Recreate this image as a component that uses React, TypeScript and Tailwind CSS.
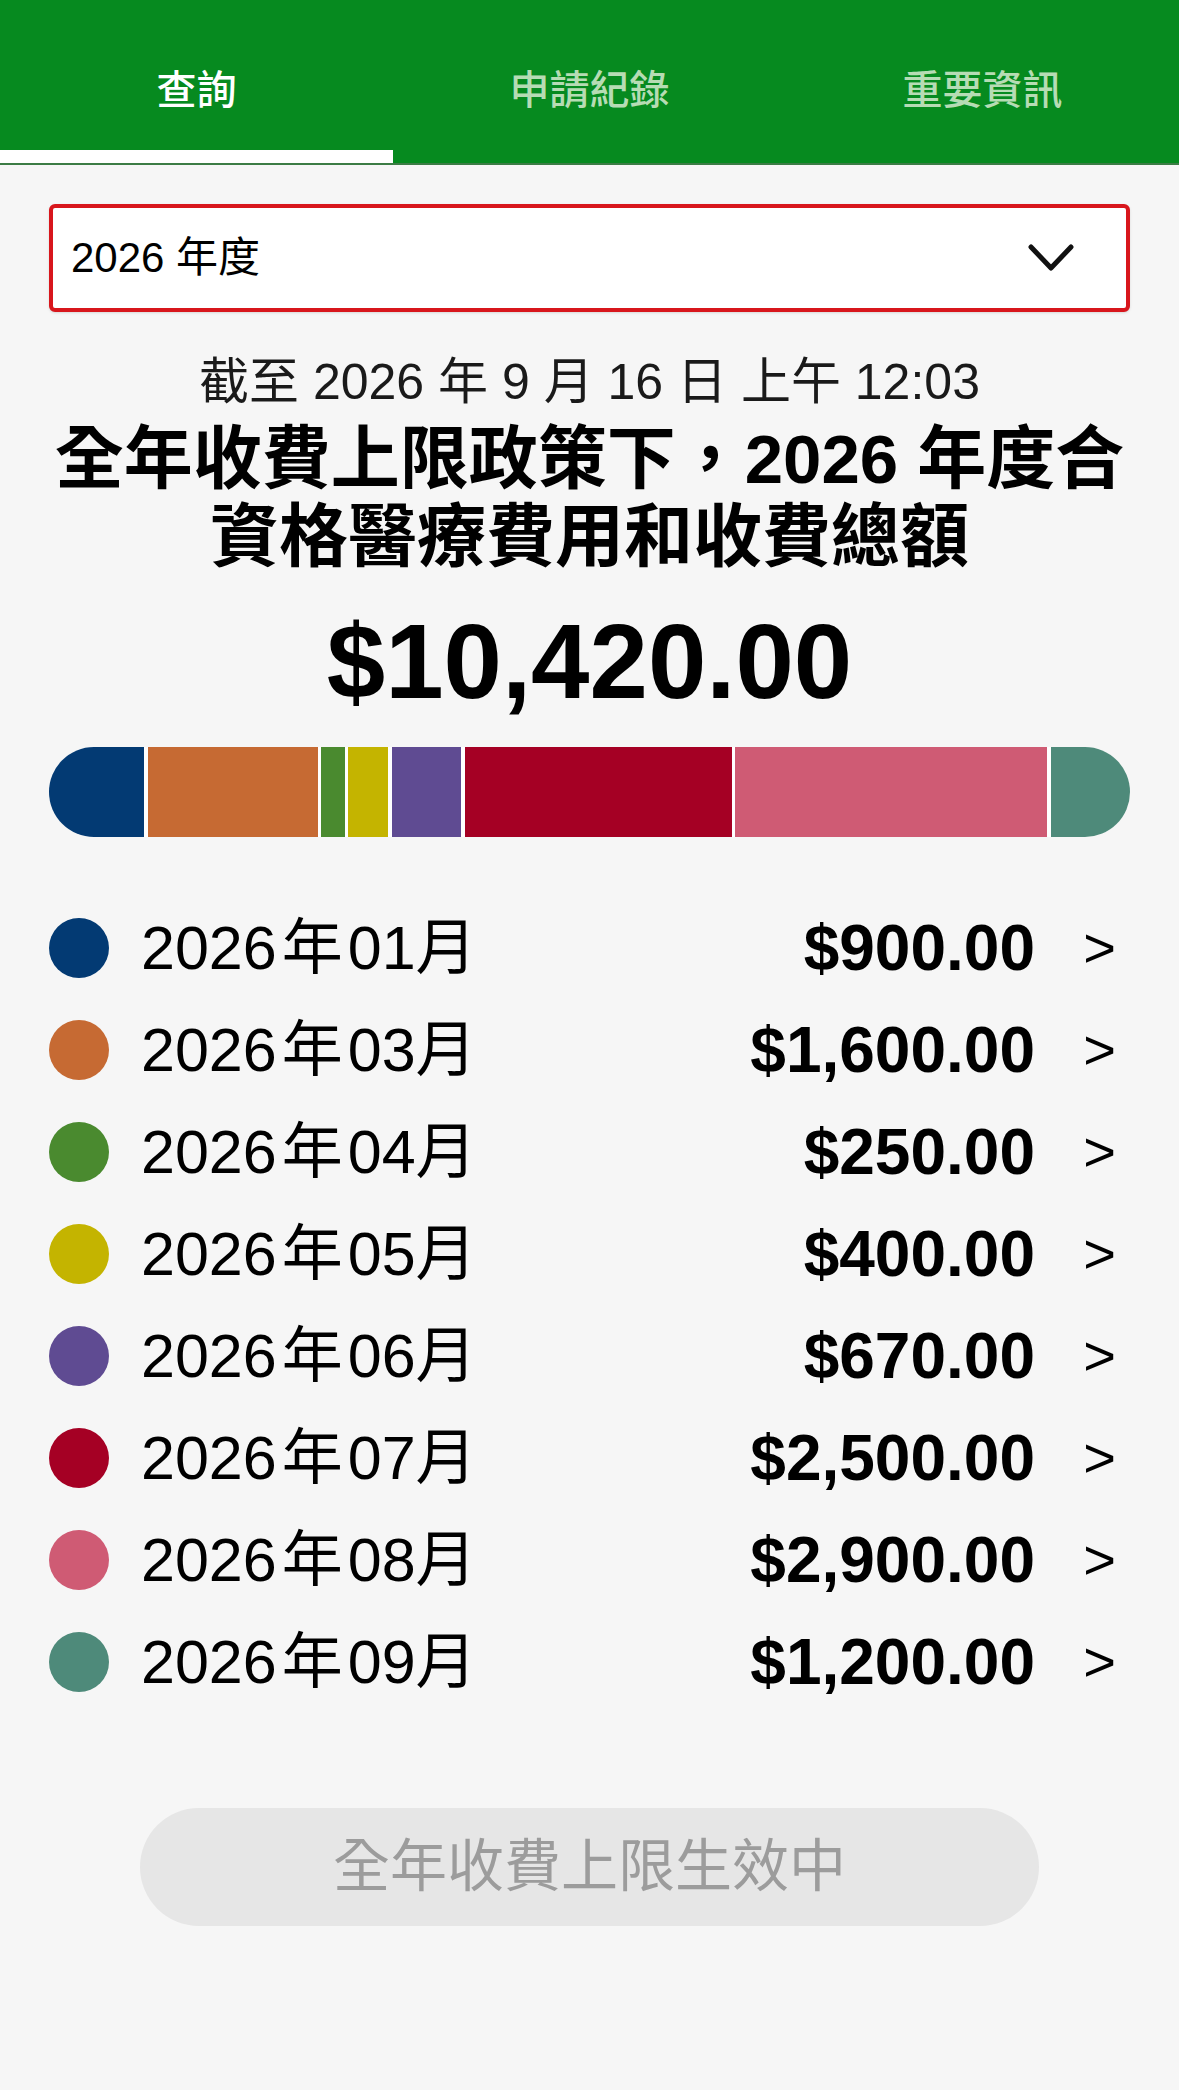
import React from 'react';

// Monthly totals under the annual fee cap
interface MonthRow {
  month: string;
  amount: string;
  color: string;
  barWidth: number;
}

const rows: MonthRow[] = [
  { month: '01', amount: '$900.00', color: '#033a73', barWidth: 95 },
  { month: '03', amount: '$1,600.00', color: '#c66a33', barWidth: 170 },
  { month: '04', amount: '$250.00', color: '#4a8a2f', barWidth: 23.5 },
  { month: '05', amount: '$400.00', color: '#c4b400', barWidth: 40 },
  { month: '06', amount: '$670.00', color: '#5f4b92', barWidth: 69.5 },
  { month: '07', amount: '$2,500.00', color: '#a50024', barWidth: 267 },
  { month: '08', amount: '$2,900.00', color: '#cf5b74', barWidth: 312 },
  { month: '09', amount: '$1,200.00', color: '#4e8a7a', barWidth: 84 },
];

const tabs = ['查詢', '申請紀錄', '重要資訊'];

const font = { fontFamily: '"Liberation Sans", "Noto Sans CJK TC", sans-serif' };

export default function App() {
  return (
    <div className="min-h-[2090px] w-[1179px] bg-[#f6f6f6] text-black" style={font}>
      {/* Tabs */}
      <div className="h-[165px] bg-[#068a1f] border-b-2 border-[#3c7c45] flex">
        {tabs.map((t, i) => (
          <div key={t} className="flex-1 flex flex-col">
            <div
              className={`flex-1 flex items-center justify-center pt-[30px] text-[40px] font-medium ${
                i === 0 ? 'text-white' : 'text-[#b6dcb4]'
              }`}
            >
              {t}
            </div>
            <div className={`h-[13px] ${i === 0 ? 'bg-white' : 'bg-transparent'}`} />
          </div>
        ))}
      </div>

      <div className="px-[49px]">
        {/* Year select */}
        <div className="mt-[39px] h-[108px] bg-white border-[4px] border-[#d8161c] rounded-[6px] shadow-sm flex items-center justify-between pl-[18px] pr-[52px]">
          <span className="text-[42px] leading-none">2026 年度</span>
          <svg width="46" height="28" viewBox="0 0 46 28" fill="none">
            <path d="M3 3 L23 24 L43 3" stroke="#111" strokeWidth="5" strokeLinecap="round" strokeLinejoin="round" />
          </svg>
        </div>

        {/* Heading */}
        <div className="mt-[40px] text-center text-[50px] leading-[60px] text-[#1a1a1a] whitespace-nowrap">
          截至 2026 年 9 月 16 日 上午 12:03
        </div>
        <div className="mt-[9px] text-center text-[69px] leading-[78px] font-bold whitespace-nowrap">
          全年收費上限政策下，2026 年度合
          <br />
          資格醫療費用和收費總額
        </div>
        <div className="mt-[25px] text-center text-[105px] leading-[120px] font-bold">$10,420.00</div>

        {/* Stacked bar */}
        <div className="mt-[25px] h-[90px] flex gap-[3.5px] bg-white rounded-full overflow-hidden">
          {rows.map((r) => (
            <div key={r.month} className="h-full shrink-0" style={{ width: r.barWidth, backgroundColor: r.color }} />
          ))}
        </div>

        {/* Month list */}
        <div className="mt-[60px] flex flex-col">
          {rows.map((r) => (
            <div key={r.month} className="h-[102px] flex items-center">
              <div className="w-[60px] h-[60px] rounded-full shrink-0" style={{ backgroundColor: r.color }} />
              <span className="ml-[32px] text-[61px] leading-none whitespace-nowrap">
                2026<span className="mx-[5px]">年</span>{r.month}月
              </span>
              <span className="ml-auto text-[64px] leading-none font-bold">{r.amount}</span>
              <span className="w-[95px] pr-[14px] text-right text-[56px] leading-none">&gt;</span>
            </div>
          ))}
        </div>
      </div>

      {/* Status button */}
      <div className="mt-[95px] flex justify-center">
        <div className="w-[899px] h-[118px] rounded-full bg-[#e6e6e6] flex items-center justify-center text-[57px] text-[#9c9c9c]">
          全年收費上限生效中
        </div>
      </div>
    </div>
  );
}
